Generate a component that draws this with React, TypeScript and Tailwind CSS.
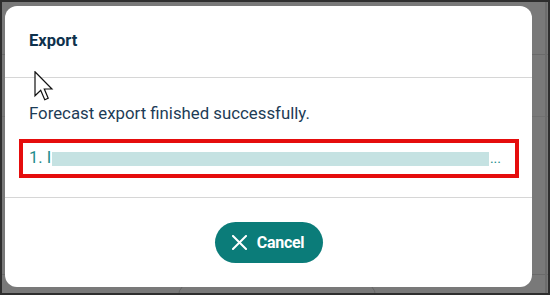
function Cursor() {
  return (
    <svg
      className="absolute left-[32px] top-[69px]"
      width="20"
      height="30"
      viewBox="0 0 13 20"
    >
      <path
        d="M0.5 0.5 L0.5 16.5 L4.3 12.9 L7 19.2 L9.3 18.2 L6.7 12 L11.8 12 Z"
        fill="#ffffff"
        stroke="#111111"
        strokeWidth="0.8"
        strokeLinejoin="miter"
      />
    </svg>
  );
}

export default function App() {
  return (
    <div
      className="relative w-[550px] h-[295px] overflow-hidden bg-[#797979] border-2 border-[#2e2e2e]"
      style={{ fontFamily: "Roboto, 'Liberation Sans', sans-serif" }}
    >
      {/* page underneath the overlay */}
      <div className="absolute left-0 right-0 top-[52px] h-px bg-[#6a6a6a]" />
      <div className="absolute left-0 right-0 top-[114px] h-px bg-[#707070]" />
      <div className="absolute left-0 right-0 top-[272px] h-px bg-[#6a6a6a]" />
      <div className="absolute right-[1px] top-0 bottom-0 w-[2px] bg-[#6c6c6c]" />
      <div className="absolute left-[176px] top-[280px] w-[198px] h-[30px] rounded-[14px] border border-[#666666]" />

      <div className="relative pl-[3px] pt-[4px]">
        <div className="w-[527px] h-[281px] bg-white rounded-[12px] flex flex-col">
          <div className="h-[71px] flex items-center px-[24px]">
            <span className="text-[16.5px] font-bold text-[#0e314c]">Export</span>
          </div>
          <div className="h-px bg-[#d6d6d6]" />

          <div className="flex flex-col pt-[24px] pb-[19px]">
            <p className="px-[24px] text-[16.8px] leading-[22px] text-[#1d3c56]">
              Forecast export finished successfully.
            </p>
            <div className="mt-[15px] ml-[14px] mr-[13px] h-[39px] border-[4px] border-[#e50d0d] flex items-center pl-[6px] pr-[14px]">
              <span className="text-[16.5px] text-[#1e8b8b] shrink-0">1. I</span>
              <span className="ml-[1px] flex-1 h-[14px] bg-[#c5e2e2]" />
              <span className="text-[14px] text-[#1e8b8b] shrink-0 ml-[1px]">...</span>
            </div>
          </div>

          <div className="h-px bg-[#d6d6d6]" />
          <div className="flex-1 flex items-center justify-center">
            <button className="h-[41px] w-[108px] rounded-full bg-[#0b7c79] text-white flex items-center justify-center gap-[10px] pr-[1px]">
              <svg width="15" height="15" viewBox="0 0 15 15">
                <path d="M1 1 L14 14 M14 1 L1 14" stroke="#ffffff" strokeWidth="2" strokeLinecap="square" />
              </svg>
              <span className="text-[16px] font-bold tracking-[-0.3px]">Cancel</span>
            </button>
          </div>
        </div>
      </div>

      <Cursor />
    </div>
  );
}
